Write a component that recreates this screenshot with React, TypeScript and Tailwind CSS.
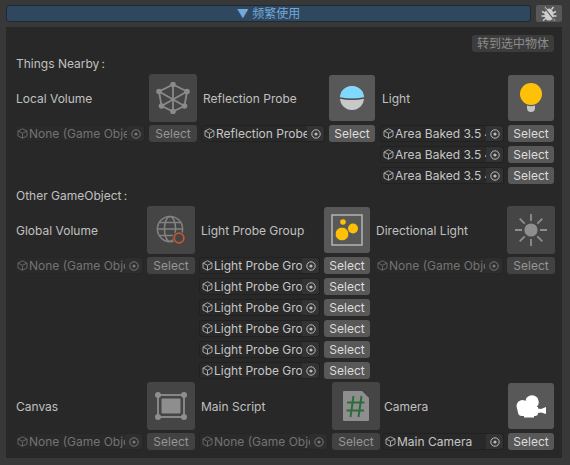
import React from "react";

const CJK = "font-['Inter','Noto_Sans_CJK_SC',sans-serif]";

function Cube({ dim }: { dim?: boolean }) {
  return (
    <svg width="11" height="11" viewBox="0 0 11 11" fill="none" stroke={dim ? "#666666" : "#a8a8a8"} strokeWidth="1" className="shrink-0">
      <path d="M5.5 .8 10 3v5L5.500 10.200 1 8V3z" />
      <path d="M1 3l4.500 2.300L10 3M5.500 5.300v4.900" />
    </svg>
  );
}

function Target({ dim }: { dim?: boolean }) {
  const c = dim ? "#787878" : "#bcbcbc";
  return (
    <svg width="10" height="10" viewBox="0 0 10 10" fill="none">
      <circle cx="5" cy="5" r="4.200" stroke={c} strokeWidth="1" />
      <circle cx="5" cy="5" r="1.600" fill={c} />
    </svg>
  );
}

function Row({ text, dim }: { text: string; dim?: boolean }) {
  return (
    <div className="flex h-[17px] gap-[4px]">
      <div className={`flex flex-1 min-w-0 items-center rounded-[3px] border pl-[2px] ${dim ? "bg-[#2a2a2a] border-[#262626]" : "bg-[#292929] border-[#212121]"}`}>
        <Cube dim={dim} />
        <span className={`ml-[1px] flex-1 min-w-0 overflow-hidden whitespace-nowrap text-[12px] leading-[15px] ${dim ? "text-[#737373]" : "text-[#c6c6c6]"}`}>{text}</span>
        <span className={`flex h-full w-[17px] shrink-0 items-center justify-center rounded-r-[3px] ${dim ? "bg-[#2e2e2e]" : "bg-[#333333]"}`}>
          <Target dim={dim} />
        </span>
      </div>
      <div className={`flex shrink-0 items-center justify-center rounded-[3px] text-[12px] leading-[15px] ${dim ? "w-[var(--iw)] bg-[#424242] text-[#959595]" : "w-[var(--iw)] bg-[#585858] text-[#dddddd]"}`}>
        Select
      </div>
    </div>
  );
}

function Col({
  label,
  icon,
  rows,
  dim,
  cw,
  iw,
}: {
  label: string;
  icon: React.ReactNode;
  rows: string[];
  dim?: boolean;
  cw: string;
  iw: number;
}) {
  return (
    <div className={`flex shrink-0 flex-col ${cw}`} style={{ "--iw": `${iw}px` } as React.CSSProperties}>
      <div className="flex h-[48px] items-center justify-between">
        <span className="pl-[2px] pt-[2px] text-[12px] text-[#c0c0c0]">{label}</span>
        <div
          className={`flex items-center justify-center rounded-[3px] ${dim ? "bg-[#454545]" : "bg-[#585858]"}`}
          style={{ width: iw, height: iw }}
        >
          {icon}
        </div>
      </div>
      <div className="mt-[3px] flex flex-col gap-[4px]">
        {rows.map((r, i) => (
          <Row key={i} text={r} dim={dim} />
        ))}
      </div>
    </div>
  );
}

const VolumeIcon = () => (
  <svg width="34" height="32" viewBox="0 0 34 32" fill="none" stroke="#8a8a8a" strokeWidth="1.800">
    <path d="M17 2.500 31 9.500 28.500 24 17 29.500 5.500 24 3 9.500zM17 2.500v27M3 9.500 28.500 24M31 9.500 5.500 24" />
    {[[17, 2.500], [31, 9.500], [3, 9.500], [28.500, 24], [5.500, 24], [17, 29.500]].map(([x, y], i) => (
      <circle key={i} cx={x} cy={y} r="2.800" fill="#8a8a8a" stroke="none" />
    ))}
  </svg>
);

const ProbeIcon = () => (
  <svg width="24" height="24" viewBox="0 0 24 24">
    <circle cx="12" cy="12" r="12" fill="#c8c8c8" />
    <path d="M0 12a12 12 0 0 1 24 0q-12 2.500-24 0z" fill="#80d8ff" />
    <path d="M0 12q12 2.500 24 0" fill="none" stroke="#4a4a4a" strokeWidth="1.400" />
  </svg>
);

const BulbIcon = () => (
  <svg width="24" height="30" viewBox="0 0 24 30">
    <circle cx="12" cy="11" r="11" fill="#ffc107" />
    <path d="M8 22.500a12 12 0 0 0 8 0V25a4 4 0 0 1-8 0z" fill="#c4c4c4" />
  </svg>
);

const GlobeIcon = () => (
  <svg width="30" height="30" viewBox="0 0 30 30" fill="none">
    <g stroke="#838383" strokeWidth="1.500">
      <circle cx="14" cy="14" r="12.600" />
      <ellipse cx="14" cy="14" rx="5.600" ry="12.600" />
      <path d="M1.400 14h25.200M3.400 7.500h21.200M3.400 20.500h21.200" />
    </g>
    <circle cx="23" cy="23" r="6.500" fill="#454545" />
    <circle cx="23" cy="23" r="4.800" fill="none" stroke="#c4572f" strokeWidth="1.800" />
  </svg>
);

const ProbeGroupIcon = () => (
  <svg width="32" height="32" viewBox="0 0 32 32" fill="none">
    <rect x="1" y="1" width="30" height="30" stroke="#b4b4b4" strokeWidth="1.500" />
    <circle cx="12" cy="8" r="2.800" fill="#ffc107" />
    <circle cx="22" cy="14.500" r="5" fill="#ffc107" />
    <circle cx="11" cy="20" r="6.800" fill="#ffc107" stroke="#585858" strokeWidth="0.800" />
  </svg>
);

const SunIcon = () => (
  <svg width="34" height="34" viewBox="0 0 34 34" fill="none">
    <circle cx="17" cy="17" r="6.600" fill="#8e8e8e" />
    <path d="M17 1v7M17 26v7M1 17h7M26 17h7M5.700 5.700l5 5M23.300 23.300l5 5M5.700 28.300l5-5M23.300 10.700l5-5" stroke="#8e8e8e" strokeWidth="1.800" />
  </svg>
);

const CanvasIcon = () => (
  <svg width="32" height="28" viewBox="0 0 32 28" fill="none">
    <rect x="3" y="3" width="26" height="22" stroke="#8e8e8e" strokeWidth="1.800" />
    <rect x="6.500" y="6.500" width="19" height="15" rx="1" fill="#8e8e8e" />
    {[[3, 3], [29, 3], [3, 25], [29, 25]].map(([x, y], i) => (
      <circle key={i} cx={x} cy={y} r="3" fill="#8e8e8e" />
    ))}
  </svg>
);

const ScriptIcon = () => (
  <svg width="28" height="32" viewBox="0 0 28 32" fill="none">
    <path d="M2 1h18l7 7v22a1 1 0 0 1-1 1H2a1 1 0 0 1-1-1V2a1 1 0 0 1 1-1z" fill="#8e8e8e" />
    <path d="M11.500 6 8.500 27M19.500 6 16.500 27M5 12.500h17.500M4.500 20.500h17.500" stroke="#2e6b3a" strokeWidth="2" />
  </svg>
);

const CameraIcon = () => (
  <svg width="32" height="23" viewBox="0 0 32 23">
    <circle cx="7.500" cy="11" r="6" fill="#fff" />
    <circle cx="17" cy="7" r="6.800" fill="#fff" />
    <path d="M2 12h21v6a3 3 0 0 1-3 3h-1v1.500H9V21H7a4 4 0 0 1-4-3z" fill="#fff" />
    <path d="M23 13.500 26 14 31 12v7l-5-1.500-3 .5z" fill="#fff" />
  </svg>
);

const BugIcon = () => (
  <svg width="16" height="15" viewBox="0 0 16 15" fill="none">
    <path d="M8 2.500c2.500 0 4.500 3 4.500 6.500s-2 5.500-4.500 5.500S3.500 12.500 3.500 9 5.500 2.500 8 2.500z" fill="#cfcfcf" />
    <path d="M5.500 3.500 3.500 1M10.500 3.500 12.500 1M4 7 1 5.500M12 7l3-1.500M4 10H.5M12 10h3.500M4.500 12.500 2 14.500M11.500 12.500 14 14.500" stroke="#cfcfcf" strokeWidth="1.500" />
    <path d="M2.500 .5 13.500 14.500" stroke="#585858" strokeWidth="1.200" />
  </svg>
);

export default function App() {
  const lp = "Light Probe Group";
  const none = "None (Game Object)";
  const area = "Area Baked 3.5 4";
  return (
    <div className={`flex h-[465px] w-[570px] flex-col overflow-hidden bg-[#383838] px-[6px] pt-[5px] ${CJK}`}>
      <div className="flex h-[17px] shrink-0 gap-[5px] pr-[2px]">
        <div className="flex flex-1 items-center justify-center rounded-[3px] border border-[#1c2a36] bg-[#2f485f] text-[12px] leading-[15px] text-[#74a8dc]">
          ▼ 频繁使用
        </div>
        <div className="flex w-[26px] items-center justify-center rounded-[2px] bg-[#585858]">
          <BugIcon />
        </div>
      </div>
      <div className="mr-[2px] mt-[5px] flex h-[431px] flex-col bg-[#282828] pl-[8px] pr-[8px] pt-[8px]">
        <div className="flex justify-end">
          <div className="flex h-[17px] w-[82px] items-center justify-center rounded-[3px] bg-[#3c3c3c] text-[12px] text-[#8c8c8c]">转到选中物体</div>
        </div>
        <div className="flex h-[22px] items-center pl-[2px] pt-[2px] text-[12px] text-[#c0c0c0]">Things Nearby&#8201;:</div>
        <div className="flex gap-[4px]">
          <Col label="Local Volume" icon={<VolumeIcon />} rows={[none]} dim cw="w-[183px]" iw={48} />
          <Col label="Reflection Probe" icon={<ProbeIcon />} rows={["Reflection Probe"]} cw="w-[174px]" iw={46} />
          <div className="ml-[1px]">
            <Col label="Light" icon={<BulbIcon />} rows={[area, area, area]} cw="w-[174px]" iw={46} />
          </div>
        </div>
        <div className="flex h-[22px] items-center pl-[2px] pt-[2px] text-[12px] text-[#c0c0c0]">Other GameObject&#8201;:</div>
        <div className="flex gap-[4px]">
          <Col label="Global Volume" icon={<GlobeIcon />} rows={[none]} dim cw="w-[181px]" iw={48} />
          <Col label="Light Probe Group" icon={<ProbeGroupIcon />} rows={[lp, lp, lp, lp, lp, lp]} cw="w-[171px]" iw={46} />
          <Col label="Directional Light" icon={<SunIcon />} rows={[none]} dim cw="w-[181px]" iw={48} />
        </div>
        <div className="mt-[3px] flex gap-[4px]">
          <Col label="Canvas" icon={<CanvasIcon />} rows={[none]} dim cw="w-[181px]" iw={48} />
          <Col label="Main Script" icon={<ScriptIcon />} rows={[none]} dim cw="w-[181px]" iw={48} />
          <div className="-ml-[2px]">
            <Col label="Camera" icon={<CameraIcon />} rows={["Main Camera"]} cw="w-[172px]" iw={46} />
          </div>
        </div>
      </div>
    </div>
  );
}
